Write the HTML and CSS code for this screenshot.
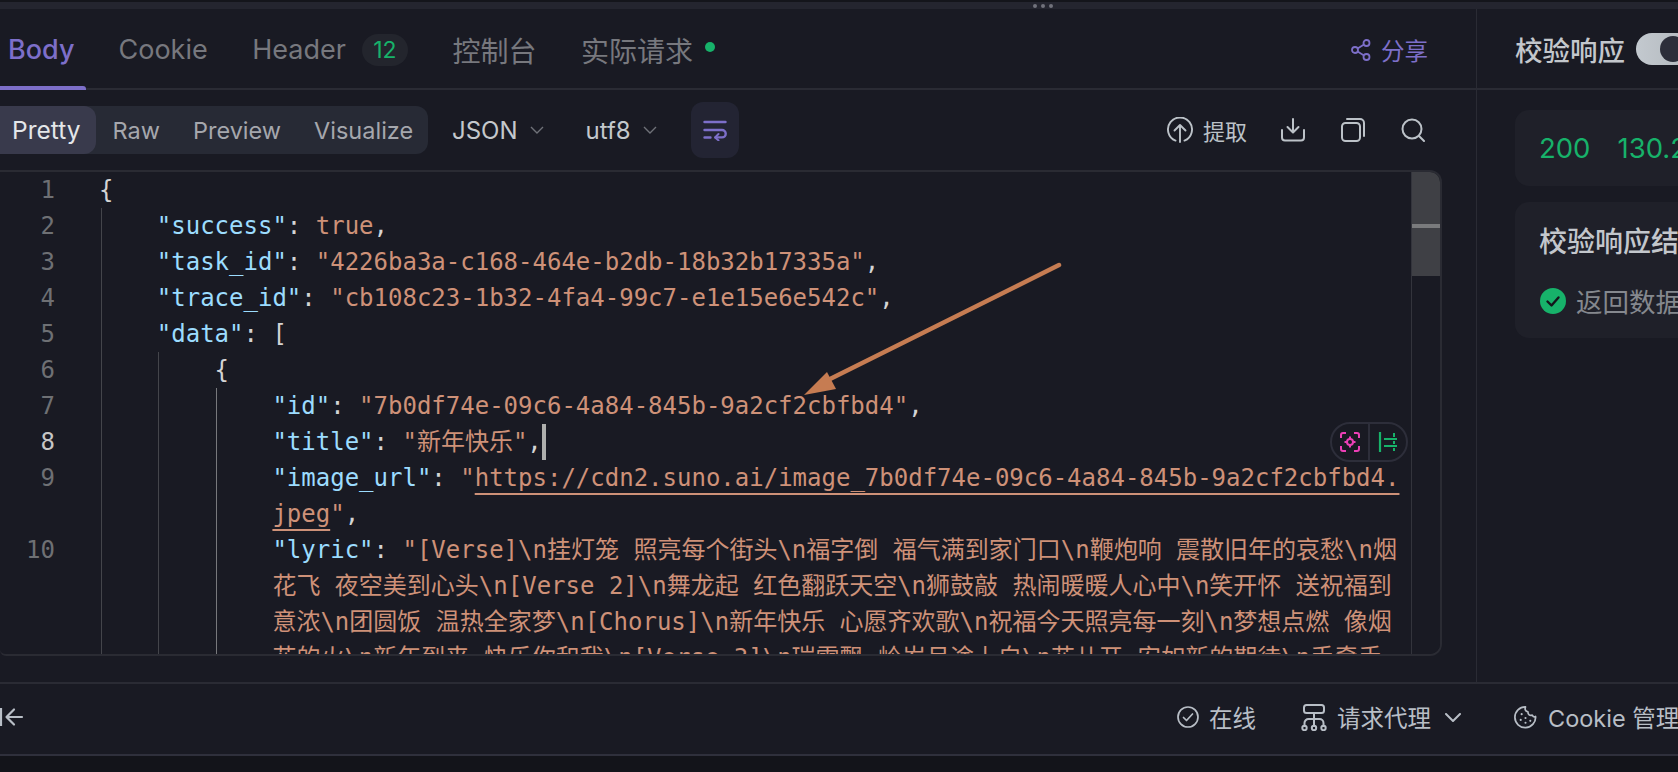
FILE: index.html
```html
<!DOCTYPE html>
<html lang="zh">
<head>
<meta charset="utf-8">
<title>Response</title>
<link rel="stylesheet" href="styles.css">
</head>
<body>
<div class="resize-bar"><span class="dots"><i></i><i></i><i></i></span></div>
<div class="main">
  <section class="left">
    <header class="tabs">
      <div class="tab tab-active">Body</div>
      <div class="tab">Cookie</div>
      <div class="tab tab-header">Header <span class="badge">12</span></div>
      <div class="tab tab-cjk">控制台</div>
      <div class="tab tab-cjk">实际请求<span class="dot"></span></div>
      <div class="share">
        <svg class="ic-share" viewBox="0 0 20 22" fill="none" stroke="currentColor" stroke-width="1.8"><circle cx="15.5" cy="4" r="3"/><circle cx="4" cy="11" r="3"/><circle cx="15.5" cy="18" r="3"/><path d="M6.6 9.4 13 5.6M6.6 12.6 13 16.4"/></svg>
        <span>分享</span>
      </div>
    </header>
    <div class="toolbar">
      <div class="seg">
        <span class="seg-item seg-on">Pretty</span>
        <span class="seg-item">Raw</span>
        <span class="seg-item">Preview</span>
        <span class="seg-item">Visualize</span>
      </div>
      <div class="select sel-json">JSON<svg class="chev" viewBox="0 0 14 8" fill="none" stroke="currentColor" stroke-width="1.4"><path d="M1 1l6 6 6-6"/></svg></div>
      <div class="select sel-utf">utf8<svg class="chev" viewBox="0 0 14 8" fill="none" stroke="currentColor" stroke-width="1.4"><path d="M1 1l6 6 6-6"/></svg></div>
      <div class="wrap-btn">
        <svg viewBox="0 0 24 22" fill="none" stroke="currentColor" stroke-width="2.4" stroke-linecap="round" stroke-linejoin="round"><path d="M1.5 3h21M1.5 11h17.5a3.4 3.4 0 0 1 0 7.4h-6.5M1.5 18.5h6"/><path d="M15.5 15l-3.4 3.4 3.4 3" stroke-width="2"/></svg>
      </div>
      <div class="tools">
        <div class="tool-extract">
          <svg class="ic-26" viewBox="0 0 26 26" fill="none" stroke="currentColor" stroke-width="1.9" stroke-linecap="round" stroke-linejoin="round"><path d="M8.5 23.6A12 12 0 1 1 17.5 23.6"/><path d="M13 25V8M7.5 13.5 13 8l5.5 5.5"/></svg>
          <span>提取</span>
        </div>
        <svg class="ic-24" viewBox="0 0 24 24" fill="none" stroke="currentColor" stroke-width="2" stroke-linecap="round" stroke-linejoin="round"><path d="M12 1v13M6.5 9 12 14.5 17.500 9"/><path d="M1 12v7.500a3 3 0 0 0 3 3h16a3 3 0 0 0 3-3V12"/></svg>
        <svg class="ic-24" viewBox="0 0 24 24" fill="none" stroke="currentColor" stroke-width="2" stroke-linecap="round" stroke-linejoin="round"><rect x="1" y="5" width="18" height="18" rx="3.500"/><path d="M6 1h13a4 4 0 0 1 4 4v13"/></svg>
        <svg class="ic-24" viewBox="0 0 24 24" fill="none" stroke="currentColor" stroke-width="2" stroke-linecap="round"><circle cx="11" cy="11" r="9.500"/><path d="M18 18l5 5"/></svg>
      </div>
    </div>
    <div class="editor">
      <div class="code">
        <div class="row"><span class="num">1</span><span class="txt"><b class="p">{</b></span></div>
        <div class="row"><span class="num">2</span><span class="txt i1"><b class="k">"success"</b><b class="p">: </b><b class="v">true</b><b class="p">,</b></span></div>
        <div class="row"><span class="num">3</span><span class="txt i1"><b class="k">"task_id"</b><b class="p">: </b><b class="v">"4226ba3a-c168-464e-b2db-18b32b17335a"</b><b class="p">,</b></span></div>
        <div class="row"><span class="num">4</span><span class="txt i1"><b class="k">"trace_id"</b><b class="p">: </b><b class="v">"cb108c23-1b32-4fa4-99c7-e1e15e6e542c"</b><b class="p">,</b></span></div>
        <div class="row"><span class="num">5</span><span class="txt i1"><b class="k">"data"</b><b class="p">: [</b></span></div>
        <div class="row"><span class="num">6</span><span class="txt i2"><b class="p">{</b></span></div>
        <div class="row"><span class="num">7</span><span class="txt i3"><b class="k">"id"</b><b class="p">: </b><b class="v">"7b0df74e-09c6-4a84-845b-9a2cf2cbfbd4"</b><b class="p">,</b></span></div>
        <div class="row row-cur"><span class="num">8</span><span class="txt i3"><b class="k">"title"</b><b class="p">: </b><b class="v">"新年快乐"</b><b class="p">,</b><i class="caret"></i></span></div>
        <div class="row"><span class="num">9</span><span class="txt i3"><b class="k">"image_url"</b><b class="p">: </b><b class="v">"</b><b class="v link">https://cdn2.suno.ai/image_7b0df74e-09c6-4a84-845b-9a2cf2cbfbd4.</b><br><b class="v link">jpeg</b><b class="v">"</b><b class="p">,</b></span></div>
        <div class="row"><span class="num">10</span><span class="txt i3"><b class="k">"lyric"</b><b class="p">: </b><b class="v">"[Verse]\n挂灯笼 照亮每个街头\n福字倒 福气满到家门口\n鞭炮响 震散旧年的哀愁\n烟<br>花飞 夜空美到心头\n[Verse 2]\n舞龙起 红色翻跃天空\n狮鼓敲 热闹暖暖人心中\n笑开怀 送祝福到<br>意浓\n团圆饭 温热全家梦\n[Chorus]\n新年快乐 心愿齐欢歌\n祝福今天照亮每一刻\n梦想点燃 像烟<br>花的火\n新年到来 快乐你和我\n[Verse 3]\n瑞雪飘 岭岁月途上白\n花儿开 安如新的期待\n手牵手</b></span></div>
      </div>
      <div class="guide g1"></div>
      <div class="guide g2"></div>
      <div class="guide g3"></div>
      <div class="scroll"><div class="thumb"><div class="mark"></div></div></div>
      <div class="widget">
        <span class="w-cell">
          <svg viewBox="0 0 20 20" fill="none" stroke="#ec3fb6" stroke-width="2"><path d="M1 6V3a2 2 0 0 1 2-2h3M14 1h3a2 2 0 0 1 2 2v3M19 14v3a2 2 0 0 1-2 2h-3M6 19H3a2 2 0 0 1-2-2v-3"/><circle cx="10" cy="10" r="3"/><path d="M10 4.500V7M10 13v2.500M4.500 10H7M13 10h2.500"/></svg>
        </span>
        <span class="w-cell">
          <svg viewBox="0 0 20 20" fill="none" stroke="#17b26a" stroke-width="2"><path d="M2 0v20" stroke-width="2.200"/><path d="M6 7h13M6 14h13"/><path d="M16 1v4M16 9v3M16 16v3"/></svg>
        </span>
      </div>
      <svg class="arrow" viewBox="0 0 270 140" fill="none"><path d="M261 5 22 124" stroke="#c67c52" stroke-width="4.500" stroke-linecap="round"/><path d="M6 135 29 112 38 129Z" fill="#c67c52"/></svg>
    </div>
  </section>
  <aside class="right">
    <header class="r-head"><span>校验响应</span><span class="toggle"><i></i></span></header>
    <div class="r-body">
      <div class="card card-stat"><span>200</span><span>130.25 ms</span></div>
      <div class="card card-res">
        <div class="res-title">校验响应结果</div>
        <div class="res-line">
          <svg viewBox="0 0 26 26"><circle cx="13" cy="13" r="13" fill="#17b26a"/><path d="M7.500 13.500l4 4 7-8" fill="none" stroke="#14151b" stroke-width="2.400" stroke-linecap="round" stroke-linejoin="round"/></svg>
          <span>返回数据结构校验通过</span>
        </div>
      </div>
    </div>
  </aside>
</div>
<footer class="status">
  <div class="status-left">
    <svg viewBox="0 0 24 20" fill="none" stroke="currentColor" stroke-width="2.200" stroke-linecap="round" stroke-linejoin="round"><path d="M1 1v18" stroke-linecap="butt"/><path d="M22 10H7M14 2.500 6.500 10l7.500 7.500"/></svg>
  </div>
  <div class="st-item st-online">
    <svg class="s22" viewBox="0 0 22 22" fill="none" stroke="currentColor" stroke-width="1.700" stroke-linecap="round" stroke-linejoin="round"><circle cx="11" cy="11" r="10"/><path d="M6.500 11.500l3 3 6-6.500"/></svg>
    <span>在线</span>
  </div>
  <div class="st-item st-proxy">
    <svg class="s26" viewBox="0 0 26 27" fill="none" stroke="currentColor" stroke-width="2" stroke-linecap="round" stroke-linejoin="round"><rect x="3" y="1" width="20" height="8" rx="2.500"/><path d="M13 9v13M3.500 22v-3a4 4 0 0 1 4-4h11a4 4 0 0 1 4 4v3"/><circle cx="3.500" cy="24" r="2.200"/><circle cx="13" cy="24" r="2.200"/><circle cx="22.500" cy="24" r="2.200"/></svg>
    <span>请求代理</span>
    <svg class="chev-s" viewBox="0 0 16 9" fill="none" stroke="currentColor" stroke-width="2" stroke-linecap="round" stroke-linejoin="round"><path d="M1 1l7 7 7-7"/></svg>
  </div>
  <div class="st-item st-cookie">
    <svg class="s24" viewBox="0 0 24 24" fill="none" stroke="currentColor" stroke-width="1.800" stroke-linecap="round" stroke-linejoin="round"><path d="M12 1.500c-1 2.500 0 4.500 2.500 5 0 3 2 4.500 4.500 3.500 .8 1.500 2.500 2 3.500 1.500A10.800 10.800 0 1 1 12 1.500z"/><path d="M8 9h.01M7 15h.01M12 13h.01M12 18h.01M17 16h.01" stroke-width="2.200"/></svg>
    <span>Cookie 管理器</span>
  </div>
</footer>
<div class="bottom"></div>
</body>
</html>
```

FILE: styles.css
```css
* { box-sizing: border-box; }
html, body { margin: 0; padding: 0; }
body {
  width: 1678px;
  height: 772px;
  overflow: hidden;
  background: #191a23;
  font-family: Inter, "Noto Sans CJK SC", sans-serif;
  display: flex;
  flex-direction: column;
}
svg { display: block; flex: none; }

.resize-bar {
  height: 9px;
  flex: none;
  background: #24252f;
  border-top: 2px solid #14151b;
  position: relative;
}
.dots { position: absolute; left: 1033px; top: 2px; display: flex; gap: 4px; }
.dots i { width: 4px; height: 4px; border-radius: 50%; background: #71727b; }

.main { flex: none; height: 675px; display: flex; border-bottom: 2px solid #2a2b34; }
.left { width: 1477px; flex: none; border-right: 1px solid #2a2b34; display: flex; flex-direction: column; }
.right { flex: 1; min-width: 0; overflow: hidden; }

.tabs {
  height: 81px;
  flex: none;
  display: flex;
  align-items: center;
  gap: 20.500px;
  border-bottom: 2px solid #2a2b34;
  padding: 2px 48px 0 0;
  font-size: 27px;
  color: #77787e;
  white-space: nowrap;
}
.tab { padding: 0 12px; position: relative; height: 100%; display: flex; align-items: center; }
.tab-cjk { font-size: 28px; }
.tab-active { padding: 0 11px 0 8px; color: #7d6fc9; font-weight: 500; width: 86px; }
.tab-active::after {
  content: "";
  position: absolute;
  left: 0;
  right: 0;
  bottom: -2px;
  height: 4px;
  background: #7d6fc9;
  border-top-right-radius: 3px;
}
.badge {
  margin-left: 16px;
  width: 46px;
  height: 32px;
  border-radius: 16px;
  background: #23252d;
  color: #17b26a;
  font-size: 23px;
  display: inline-flex;
  align-items: center;
  justify-content: center;
}
.dot { width: 10px; height: 10px; border-radius: 50%; background: #17b26a; margin: -6px 0 0 12px; }
.share { margin-left: auto; display: flex; align-items: center; gap: 10px; color: #7d6fc9; font-size: 23.500px; }
.ic-share { width: 20px; height: 22px; }

.toolbar {
  height: 80px;
  flex: none;
  display: flex;
  align-items: center;
  padding-right: 51px;
  white-space: nowrap;
  font-size: 24px;
}
.seg {
  width: 428px;
  height: 48px;
  flex: none;
  display: flex;
  align-items: center;
  background: #272a35;
  border-radius: 0 12px 12px 0;
  color: #a5a7ad;
  margin-right: 24px;
  font-size: 23.500px;
}
.seg-item { flex: none; padding: 0 16.500px; height: 100%; display: flex; align-items: center; }
.seg-on { padding: 0 12px; width: 96px; background: #393a4c; color: #e4e6e9; border-radius: 0 12px 12px 0; font-size: 24.500px; }
.select { display: flex; align-items: center; gap: 12px; color: #c4c8cc; }
.chev { width: 14px; height: 8px; color: #6f7178; }
.sel-json { margin-right: 42px; }
.sel-utf { margin-right: 34px; }
.wrap-btn {
  width: 48px;
  height: 56px;
  border-radius: 12px;
  background: #232433;
  color: #7d6fc9;
  display: flex;
  align-items: center;
  justify-content: center;
}
.wrap-btn svg { width: 24px; height: 22px; }
.tools { margin-left: auto; display: flex; align-items: center; gap: 36px; color: #bcc2c8; }
.tool-extract { display: flex; align-items: center; gap: 10px; font-size: 22px; margin-right: -2px; }
.ic-26 { width: 26px; height: 26px; }
.ic-24 { width: 24px; height: 24px; }

.editor {
  width: 1442px;
  height: 486px;
  flex: none;
  position: relative;
  overflow: hidden;
  border: 2px solid #2a2b33;
  border-left: 0;
  border-radius: 0 12px 12px 6px;
}
.code {
  height: 100%;
  overflow: hidden;
  font-family: "DejaVu Sans Mono", "Noto Sans CJK SC", monospace;
  font-size: 24px;
  line-height: 36px;
}
.row { display: flex; white-space: pre; }
.num { width: 55px; flex: none; text-align: right; color: #6e7074; }
.row-cur .num { color: #c6c6c6; }
.txt { margin-left: 44px; }
.txt b { font-weight: 400; }
.i1 { padding-left: 4ch; }
.i2 { padding-left: 8ch; }
.i3 { padding-left: 12ch; }
.k { color: #9cdcfe; }
.v { color: #ce9178; }
.p { color: #d4d4d4; }
.link { text-decoration: underline; text-decoration-thickness: 2px; text-underline-offset: 7px; }
.caret { display: inline-block; width: 4px; height: 36px; background: #aeafad; vertical-align: top; }

.guide { position: absolute; bottom: 0; width: 1px; background: #44454b; }
.g1 { left: 101px; top: 36px; }
.g2 { left: 158px; top: 180px; }
.g3 { left: 216px; top: 216px; background: #77787c; }

.scroll { position: absolute; top: 0; right: 0; bottom: 0; width: 29px; border-left: 1px solid #33343c; background: #191a23; }
.thumb { height: 104px; background: #3f4045; padding-top: 52px; }
.mark { height: 4px; background: #7a7b7d; }

.widget {
  position: absolute;
  left: 1330px;
  top: 250px;
  width: 78px;
  height: 40px;
  border: 2px solid #2d2e3a;
  border-radius: 20px;
  background: #191a23;
  display: flex;
}
.w-cell { flex: 1; display: flex; align-items: center; justify-content: center; }
.w-cell + .w-cell { border-left: 2px solid #2d2e3a; }
.w-cell svg { width: 20px; height: 20px; }

.arrow { position: absolute; left: 798px; top: 88px; width: 270px; height: 140px; }

.r-head {
  height: 81px;
  display: flex;
  align-items: center;
  gap: 11px;
  padding-left: 38px;
  border-bottom: 2px solid #2a2b34;
  font-size: 27.500px;
  font-weight: 500;
  color: #c3c7cc;
  white-space: nowrap;
}
.toggle {
  flex: none;
  width: 70px;
  height: 32px;
  border-radius: 16px;
  background: linear-gradient(90deg, #c3c9cf, #aeb3b8);
  padding: 3px 0 0 24px;
  display: block;
}
.toggle i { display: block; width: 26px; height: 26px; border-radius: 50%; background: #2c2e3a; }
.r-body { padding: 20px 0 0 38px; display: flex; flex-direction: column; gap: 16px; white-space: nowrap; }
.card { background: #1f2029; border-radius: 14px 0 0 14px; width: 260px; }
.card-stat { height: 76px; display: flex; align-items: center; gap: 27px; padding-left: 24px; font-size: 27.500px; color: #17b26a; }
.card-res { height: 136px; padding: 22px 0 0 24px; }
.res-title { font-size: 28px; font-weight: 500; color: #c3c7cc; line-height: 36px; }
.res-line { margin-top: 21px; padding-left: 1px; display: flex; align-items: center; gap: 10px; font-size: 26.500px; color: #85888e; }
.res-line svg { width: 26px; height: 26px; }

.status {
  height: 70px;
  flex: none;
  display: flex;
  align-items: center;
  padding-bottom: 4px;
  white-space: nowrap;
  overflow: hidden;
  font-size: 23.500px;
  color: #b8bec6;
}
.status-left { width: 1177px; flex: none; }
.status-left svg { width: 24px; height: 20px; }
.st-item { display: flex; align-items: center; flex: none; }
.st-online { gap: 10px; margin-right: 45px; }
.st-proxy { gap: 10px; margin-right: 53px; }
.st-cookie { gap: 11px; }
.s22 { width: 22px; height: 22px; }
.s26 { width: 26px; height: 27px; }
.s24 { width: 23px; height: 24px; }
.chev-s { width: 16px; height: 9px; margin-left: 4px; }

.bottom { flex: 1; background: #13141a; border-top: 2px solid #2f303c; }
```
